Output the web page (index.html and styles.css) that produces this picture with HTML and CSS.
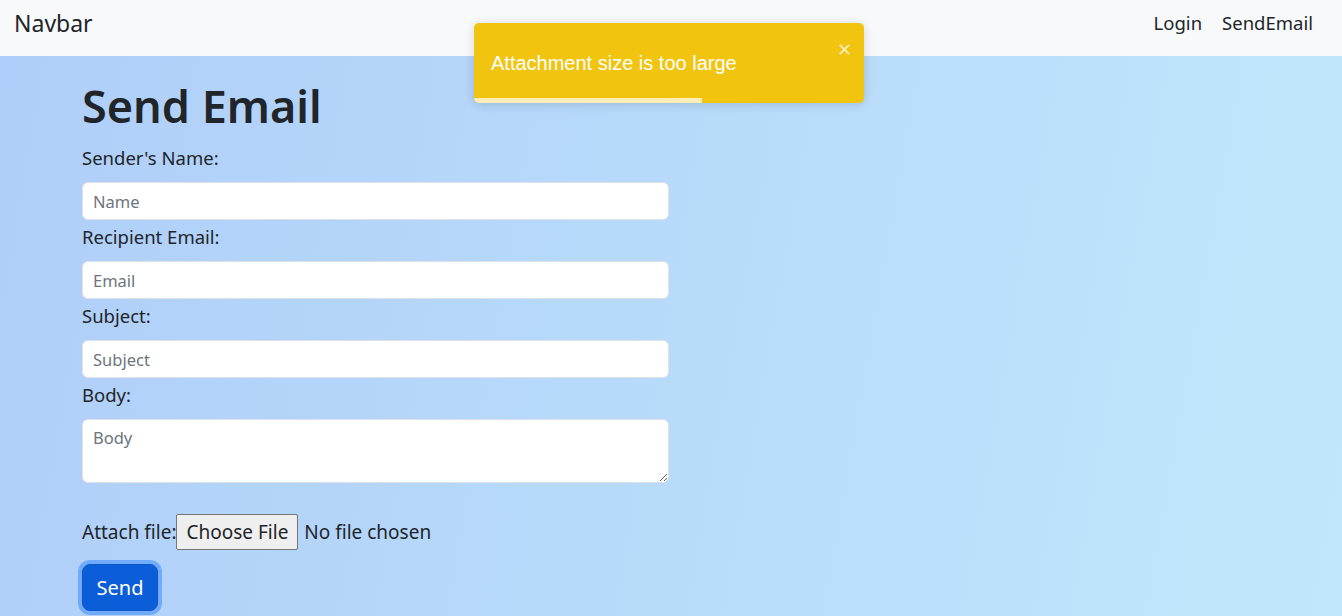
FILE: index.html
```html
<!DOCTYPE html>
<html lang="en">
<head>
<meta charset="utf-8">
<title>Send Email</title>
<link rel="stylesheet" href="styles.css">
</head>
<body>
<nav class="navbar">
  <a class="brand" href="#">Navbar</a>
  <div class="nav-links">
    <a class="nav-link" href="#">Login</a>
    <a class="nav-link" href="#">SendEmail</a>
  </div>
</nav>
<main class="page">
  <h1 class="title">Send Email</h1>
  <form class="form">
    <label class="form-label">Sender's Name:</label>
    <input class="form-control" type="text" placeholder="Name">
    <label class="form-label">Recipient Email:</label>
    <input class="form-control" type="email" placeholder="Email">
    <label class="form-label">Subject:</label>
    <input class="form-control" type="text" placeholder="Subject">
    <label class="form-label">Body:</label>
    <textarea class="form-control textarea" placeholder="Body"></textarea>
    <div class="file-row">
      <span class="file-label">Attach file:</span><span class="file-btn">Choose File</span><span class="file-name">No file chosen</span>
    </div>
    <div class="send-row">
      <button type="button" class="btn-send">Send</button>
    </div>
  </form>
</main>
<div class="toast">
  <div class="toast-body">Attachment size is too large</div>
  <span class="toast-close">&#x2715;</span>
  <div class="toast-progress"></div>
</div>
</body>
</html>
```
FILE: styles.css
```css
* { box-sizing: border-box; }
html, body { margin: 0; height: 100%; }
body {
  font-family: "Noto Sans", "Open Sans", sans-serif;
  font-size: 16px;
  color: #212529;
  background: linear-gradient(100deg, #afcef9 0%, #c1e7fb 100%);
  overflow: hidden;
}
.navbar {
  height: 56px;
  background: #f8f9fa;
  display: flex;
  align-items: center;
  justify-content: space-between;
  padding: 0 21px 11px 14px;
}
.brand {
  font-size: 23px;
  color: #212529;
  text-decoration: none;
}
.nav-links { display: flex; gap: 4px; }
.nav-link {
  font-size: 18.5px;
  color: #212529;
  text-decoration: none;
  padding: 0 8px;
}
.page { padding: 0 82px; }
.title {
  margin: 0;
  padding-top: 23px;
  font-size: 45px;
  line-height: 54px;
  font-weight: 600;
  color: #212529;
}
.form { width: 587px; display: flex; flex-direction: column; }
.form-label {
  display: block;
  font-size: 18.5px;
  line-height: 24px;
  margin: 5px 0 12px;
}
.form-label:first-child { margin-top: 13px; }
.form-control {
  display: block;
  width: 100%;
  height: 38px;
  padding: 6px 10px;
  font: inherit;
  font-size: 16.5px;
  color: #212529;
  background: #fff;
  border: 1px solid #dee2e6;
  border-radius: 6px;
}
.form-control::placeholder { color: #6c757d; }
.textarea { height: 64px; resize: vertical; }
.file-row {
  margin-top: 31px;
  display: flex;
  align-items: center;
  font-size: 19px;
  height: 36px;
}
.file-btn {
  display: inline-flex;
  align-items: center;
  height: 36px;
  padding: 0 9px;
  background: #efefef;
  border: 1px solid #767676;
  border-radius: 2px;
  margin-right: 6px;
}
.send-row { margin-top: 14px; }
.btn-send {
  font: inherit;
  font-size: 20px;
  color: #fff;
  background: #0b5ed7;
  border: 1px solid #0a58ca;
  border-radius: 8px;
  height: 47px;
  width: 76px;
  padding: 0;
  box-shadow: 0 0 0 4px rgba(49, 132, 253, 0.5);
}
.toast {
  position: absolute;
  left: 474px;
  top: 23px;
  width: 390px;
  height: 80px;
  background: #f1c40f;
  border-radius: 5px;
  box-shadow: 0 1px 10px rgba(0,0,0,0.1), 0 2px 15px rgba(0,0,0,0.05);
  overflow: hidden;
  font-family: "Liberation Sans", Arial, sans-serif;
  color: #fff;
}
.toast-body {
  padding: 28px 0 0 17px;
  font-size: 20px;
  line-height: 24px;
}
.toast-close {
  position: absolute;
  right: 12px;
  top: 17px;
  font-size: 18px;
  line-height: 20px;
  color: rgba(255,255,255,0.7);
  font-family: "DejaVu Sans", sans-serif;
  font-weight: bold;
}
.toast-progress {
  position: absolute;
  left: 0;
  bottom: 0;
  height: 5px;
  width: 228px;
  background: rgba(255,255,255,0.7);
}
```
